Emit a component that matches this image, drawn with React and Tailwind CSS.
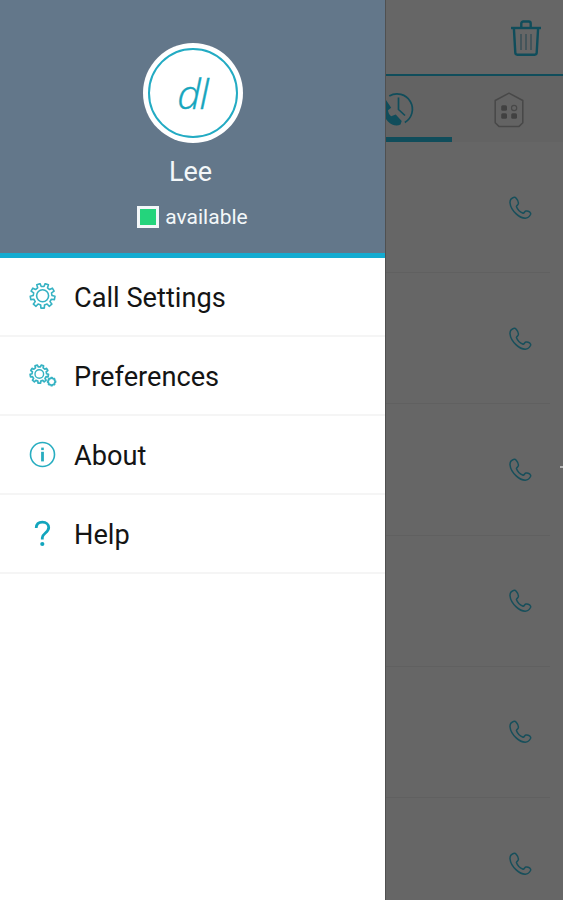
import clsx from 'clsx'

// outline of a cog wheel with square teeth
const gearPath = (cx, cy, outer, inner, teeth, offset = 0) => {
    const step = (Math.PI * 2) / teeth
    const points = []
    for (let i = 0; i < teeth; i++) {
        const mid = i * step + offset
        const corners = [[-0.29, inner], [-0.2, outer], [0.2, outer], [0.29, inner]]
        corners.forEach(([shift, r]) => {
            const a = mid + shift * step
            points.push(`${(cx + r * Math.sin(a)).toFixed(2)} ${(cy - r * Math.cos(a)).toFixed(2)}`)
        })
    }
    return `M${points.join('L')}Z`
}

const GearIcon = () => (
    <svg width="28" height="28" viewBox="0 0 28 28" fill="none" stroke="#35b2c3" strokeWidth="1.6" strokeLinejoin="round">
        <path d={gearPath(13.6, 12.8, 12.4, 9.4, 9, Math.PI / 9)} />
        <circle cx="13.6" cy="12.8" r="6" />
    </svg>
)

const GearsIcon = () => (
    <svg width="28" height="28" viewBox="0 0 28 28" fill="none" stroke="#35b2c3" strokeWidth="1.7" strokeLinejoin="round">
        <path d={gearPath(10.3, 12, 9.2, 7.3, 9, Math.PI / 9)} />
        <circle cx="10.3" cy="12" r="4.3" strokeWidth="1.4" />
        <path d={gearPath(22.6, 19.6, 4.1, 3.2, 8)} strokeWidth="1.5" />
    </svg>
)

const InfoIcon = () => (
    <svg width="28" height="28" viewBox="0 0 28 28" fill="none" stroke="#27adc0">
        <circle cx="13.5" cy="13.5" r="12" strokeWidth="1.6" />
        <path d="M13.5 10.8v9.6" strokeWidth="2.8" />
        <path d="M13.5 6.6v2.5" strokeWidth="2.6" />
    </svg>
)

const HelpIcon = () => (
    <svg width="28" height="28" viewBox="0 0 28 28" fill="none" stroke="#12a5bd">
        <path d="M7.2 8C7.4 4.1 10 2.2 13.4 2.2c3.9 0 6.3 2.2 6.3 5.4 0 5.2-6.4 5.5-6.4 10.2v1.6" strokeWidth="2.8" />
        <circle cx="13.3" cy="24" r="2.1" fill="#12a5bd" stroke="none" />
    </svg>
)

const TrashIcon = () => (
    <svg width="32" height="38" viewBox="0 0 32 38" fill="none" stroke="#104d5b" strokeWidth="2.4">
        <path d="M11.3 8V4.5a2 2 0 0 1 2-2h5.4a2 2 0 0 1 2 2V8" />
        <path d="M1 9h30" />
        <path d="M3.900 9.5l1.400 24.3a2 2 0 0 0 2 1.900h17.400a2 2 0 0 0 2-1.900L28.100 9.500" />
        <path d="M11 15v16M16 15v16M21 15v16" stroke="#3c5158" strokeWidth="1.6" />
    </svg>
)

const RecentsIcon = () => (
    <svg width="40" height="40" viewBox="0 0 40 40" fill="none" stroke="#104d5b" strokeWidth="1.7">
        <path d="M12.3 8a15 15 0 1 1 15.5 26.500" />
        <path d="M21.500 9.500v12l6.500 6" />
        <path d="M9 12c-4 5-3.500 16 2 21.500 3.500 3.500 8.500 5.200 12.500 3l1.200-3.600-6-6.300-4.500 1.700c-2-1.500-2.900-3.500-3.200-6l3.200-2.600z" fill="#104d5b" stroke="none" />
    </svg>
)

const BuildingIcon = () => (
    <svg width="30" height="36" viewBox="0 0 30 36" fill="none" stroke="#484848" strokeWidth="1.5" strokeLinejoin="round">
        <path d="M1.200 8.500L15 1.200l13.800 7.300v22.300l-4 3.800H5.200l-4-3.800z" />
        <g fill="#414141" stroke="none">
            <rect x="7.200" y="13.200" width="5.800" height="5.600" rx="1.500" />
            <rect x="7.200" y="21.200" width="5.800" height="5.600" rx="1.500" />
            <rect x="17.200" y="21.200" width="5.800" height="5.600" rx="1.500" />
        </g>
        <circle cx="20.100" cy="16" r="2.600" strokeWidth="1.200" />
    </svg>
)

// classic handset with rounded ear and mouth pieces
const PhoneIcon = () => (
    <svg width="24" height="24" viewBox="0 0 24 24" fill="none" stroke="#174f5b" strokeWidth="1.5" strokeLinejoin="round">
        <path d="M5.400 1.500C3.200 2.300 1.900 4.200 2 6.700c.4 4.200 2.800 8 6.200 11.200 2.700 2.500 5.700 4.300 9 4.300 2.300 0 4.200-1.500 5.300-3.700.4-.9.100-1.700-.6-2.300-1.300-1-2.800-1.500-4-1.200-1.400.4-1.500 1.900-2.800 2.300-2.900-1-5.600-3.700-6.700-6.700.3-1.400 1.900-1.700 2-3.100.2-1.700-.8-3.600-2.200-5.200-.8-1-1.800-1.200-2.800-.8z" />
    </svg>
)

const menu = [
    { label: 'Call Settings', icon: GearIcon },
    { label: 'Preferences', icon: GearsIcon },
    { label: 'About', icon: InfoIcon },
    { label: 'Help', icon: HelpIcon },
]

const Drawer = () => (
    <aside className="w-[385px] shrink-0 bg-white">
        <header className="h-[258px] bg-[#63778a] border-b-[5px] border-[#14abd0] flex flex-col items-center pt-[43px] text-[#f3f7f9]">
            <div className="size-[100px] rounded-full bg-white p-[5px]">
                <div className="size-full rounded-full border-[2.5px] border-[#23abc3] flex items-center justify-center">
                    <span className="font-['Open_Sans'] italic font-light text-[41px] leading-none text-[#16a5bd] tracking-tight [-webkit-text-stroke:0.4px_#16a5bd]">dl</span>
                </div>
            </div>
            <h1 className="text-[27px] leading-8 mt-[13px] -ml-1">Lee</h1>
            <div className="flex items-center gap-1.5 mt-[13px]">
                <span className="size-[22px] border-[3px] border-[#f3f7f9] bg-[#24d47c]" />
                <span className="text-[21px] leading-[30px] pt-px">available</span>
            </div>
        </header>
        <nav>
            {menu.map(({ label, icon: Icon }) => (
                <button key={label} className="w-full h-[79px] flex items-center gap-[17px] pl-[29px] border-b-2 border-[#f5f5f5] text-[27.2px] text-[#141414]">
                    <Icon />
                    <span className="pt-1">{label}</span>
                </button>
            ))}
        </nav>
    </aside>
)

const CallLog = () => (
    <main className="relative flex-1 min-w-0 bg-[#666666] border-l border-[#505050]">
        <div className="h-[76px] border-b-[2px] border-[#104d5b] flex items-center justify-end pt-0.5 pr-[21px]">
            <TrashIcon />
        </div>
        <div className="h-[66px] bg-[#636363] flex">
            <div className="w-[66px] h-full border-b-[5px] border-[#104d5b] flex items-center pt-[3px] overflow-hidden">
                <div className="-ml-[9px]"><RecentsIcon /></div>
            </div>
            <div className="flex-1 flex items-center justify-center pt-0.5 pl-0.5">
                <BuildingIcon />
            </div>
        </div>
        {[0, 1, 2, 3, 4, 5].map(row => (
            <div
                key={row}
                className={clsx('h-[131.2px] mr-[13px] pr-[18px] flex items-center justify-end pt-px', row < 5 && 'border-b border-[#606060]')}
            >
                <PhoneIcon />
            </div>
        ))}
        <div className="absolute right-0 top-[466px] w-[3px] h-[2px] bg-[#b4b4b4]" />
    </main>
)

const App = () => (
    <div className="w-[563px] h-[900px] overflow-hidden flex font-[Roboto,sans-serif]">
        <Drawer />
        <CallLog />
    </div>
)

export default App
